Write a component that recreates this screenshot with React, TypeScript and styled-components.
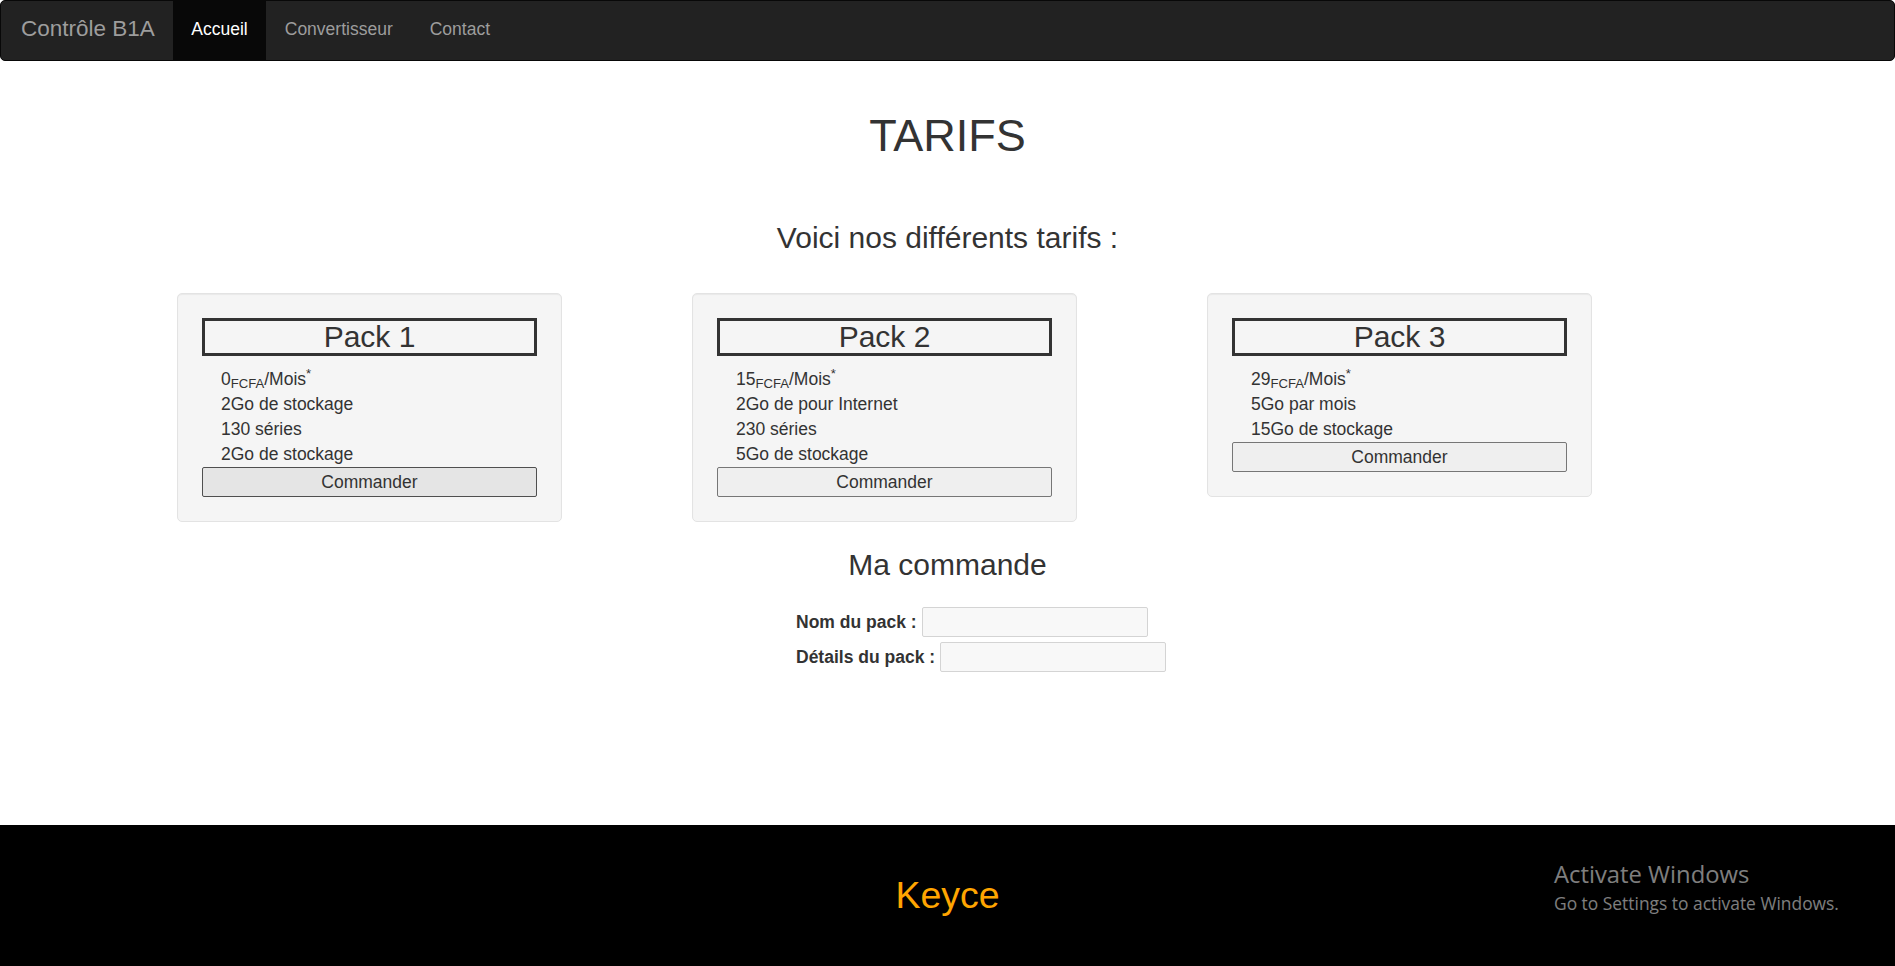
import styled, { createGlobalStyle } from 'styled-components';

const GlobalStyle = createGlobalStyle`
  * {
    box-sizing: border-box;
  }
  body {
    margin: 0;
    background: #ffffff;
    color: #333333;
    font-family: 'Liberation Sans', Arial, Helvetica, sans-serif;
    font-size: 17.5px;
    line-height: 1.42857;
  }
`;

const Page = styled.div`
  min-height: 100vh;
  display: flex;
  flex-direction: column;
`;

const NavBar = styled.nav`
  height: 61px;
  display: flex;
  align-items: stretch;
  background: #222222;
  border: 1px solid #080808;
  border-radius: 5px;
`;

const Brand = styled.a`
  display: flex;
  align-items: center;
  padding: 0 18px 2px 20px;
  font-size: 22.5px;
  color: #9d9d9d;
  text-decoration: none;
`;

type NavLinkProp = {
  $active?: boolean;
};

const NavLink = styled.a<NavLinkProp>`
  display: flex;
  align-items: center;
  padding: 0 18.5px 2px;
  font-size: 17.5px;
  color: ${(props) => (props.$active ? '#ffffff' : '#9d9d9d')};
  background: ${(props) => (props.$active ? '#080808' : 'transparent')};
  text-decoration: none;
`;

const Main = styled.main`
  display: flex;
  flex-direction: column;
  align-items: center;
`;

const Title = styled.h1`
  margin: 50px 0 0;
  font-size: 45px;
  font-weight: 500;
  line-height: 1.1;
  text-align: center;
`;

type SubTitleProp = {
  $top: number;
  $bottom: number;
};

const SubTitle = styled.h3<SubTitleProp>`
  margin: ${(props) => `${props.$top}px 0 ${props.$bottom}px`};
  font-size: 30px;
  font-weight: 500;
  line-height: 1.1;
  text-align: center;
`;

const PackGrid = styled.section`
  align-self: stretch;
  display: grid;
  grid-template-columns: repeat(3, 385px);
  column-gap: 130px;
  align-items: start;
  padding-left: 177px;
`;

const Well = styled.div`
  padding: 24px;
  background: #f5f5f5;
  border: 1px solid #e3e3e3;
  border-radius: 5px;
  box-shadow: inset 0 1px 1px rgba(0, 0, 0, 0.05);
`;

const PackName = styled.h3`
  margin: 0 0 11px;
  border: 3px solid #333333;
  font-size: 30px;
  font-weight: 500;
  line-height: 32px;
  text-align: center;
`;

const Features = styled.ul`
  list-style: none;
  margin: 0;
  padding-left: 19px;
`;

const Feature = styled.li`
  font-size: 17.5px;
  line-height: 25px;
`;

const Sub = styled.sub`
  position: relative;
  bottom: -0.25em;
  font-size: 75%;
  line-height: 0;
  vertical-align: baseline;
`;

const Sup = styled.sup`
  position: relative;
  top: -0.5em;
  font-size: 75%;
  line-height: 0;
  vertical-align: baseline;
`;

type OrderButtonProp = {
  $hover?: boolean;
};

const OrderButton = styled.button<OrderButtonProp>`
  display: block;
  width: 100%;
  height: 30px;
  padding: 0 6px;
  font-family: 'Liberation Sans', Arial, sans-serif;
  font-size: 17.5px;
  color: #333333;
  background: ${(props) => (props.$hover ? '#e5e5e5' : '#efefef')};
  border: 1px solid ${(props) => (props.$hover ? '#4f4f4f' : '#767676')};
  border-radius: 2px;
`;

const OrderForm = styled.form`
  align-self: flex-start;
  margin-left: 796px;
  display: flex;
  flex-direction: column;
  gap: 5px;
`;

const FormRow = styled.div`
  display: flex;
  align-items: center;
  gap: 5px;
  height: 30px;
`;

const FieldLabel = styled.label`
  font-weight: 700;
  font-size: 17.5px;
`;

const FieldInput = styled.input`
  width: 226px;
  height: 30px;
  background: #f8f8f8;
  border: 1px solid #d4d4d4;
  border-radius: 2px;
`;

const Footer = styled.footer`
  position: relative;
  margin-top: auto;
  height: 141px;
  display: flex;
  align-items: center;
  justify-content: center;
  background: #000000;
`;

const FooterTitle = styled.h2`
  margin: 0;
  font-size: 37.5px;
  font-weight: 500;
  line-height: 1.1;
  color: #ffa500;
`;

const Watermark = styled.div`
  position: absolute;
  left: 1554px;
  top: 34px;
  display: flex;
  flex-direction: column;
  gap: 3px;
  font-family: 'Open Sans', 'Noto Sans', sans-serif;
  color: rgba(255, 255, 255, 0.5);
  pointer-events: none;
`;

const WatermarkTitle = styled.span`
  font-size: 23.8px;
  line-height: 30px;
`;

const WatermarkText = styled.span`
  font-size: 17.4px;
  line-height: 22px;
`;

type Pack = {
  name: string;
  price: string;
  features: string[];
  hover?: boolean;
};

const packs: Pack[] = [
  {
    name: 'Pack 1',
    price: '0',
    features: ['2Go de stockage', '130 séries', '2Go de stockage'],
    hover: true,
  },
  {
    name: 'Pack 2',
    price: '15',
    features: ['2Go de pour Internet', '230 séries', '5Go de stockage'],
  },
  {
    name: 'Pack 3',
    price: '29',
    features: ['5Go par mois', '15Go de stockage'],
  },
];

function App() {
  return (
    <>
      <GlobalStyle />
      <Page>
        <NavBar>
          <Brand href="#">Contrôle B1A</Brand>
          <NavLink href="#" $active>
            Accueil
          </NavLink>
          <NavLink href="#">Convertisseur</NavLink>
          <NavLink href="#">Contact</NavLink>
        </NavBar>

        <Main>
          <Title>TARIFS</Title>
          <SubTitle $top={60.5} $bottom={39}>
            Voici nos différents tarifs :
          </SubTitle>

          <PackGrid>
            {packs.map((pack) => (
              <Well key={pack.name}>
                <PackName>{pack.name}</PackName>
                <Features>
                  <Feature>
                    {pack.price}
                    <Sub>FCFA</Sub>/Mois<Sup>*</Sup>
                  </Feature>
                  {pack.features.map((f, i) => (
                    <Feature key={i}>{f}</Feature>
                  ))}
                </Features>
                <OrderButton type="button" $hover={pack.hover}>
                  Commander
                </OrderButton>
              </Well>
            ))}
          </PackGrid>

          <SubTitle $top={26} $bottom={26}>
            Ma commande
          </SubTitle>

          <OrderForm>
            <FormRow>
              <FieldLabel htmlFor="nom">Nom du pack :</FieldLabel>
              <FieldInput id="nom" type="text" />
            </FormRow>
            <FormRow>
              <FieldLabel htmlFor="details">Détails du pack :</FieldLabel>
              <FieldInput id="details" type="text" />
            </FormRow>
          </OrderForm>
        </Main>

        <Footer>
          <FooterTitle>Keyce</FooterTitle>
          <Watermark>
            <WatermarkTitle>Activate Windows</WatermarkTitle>
            <WatermarkText>Go to Settings to activate Windows.</WatermarkText>
          </Watermark>
        </Footer>
      </Page>
    </>
  );
}

export default App;
